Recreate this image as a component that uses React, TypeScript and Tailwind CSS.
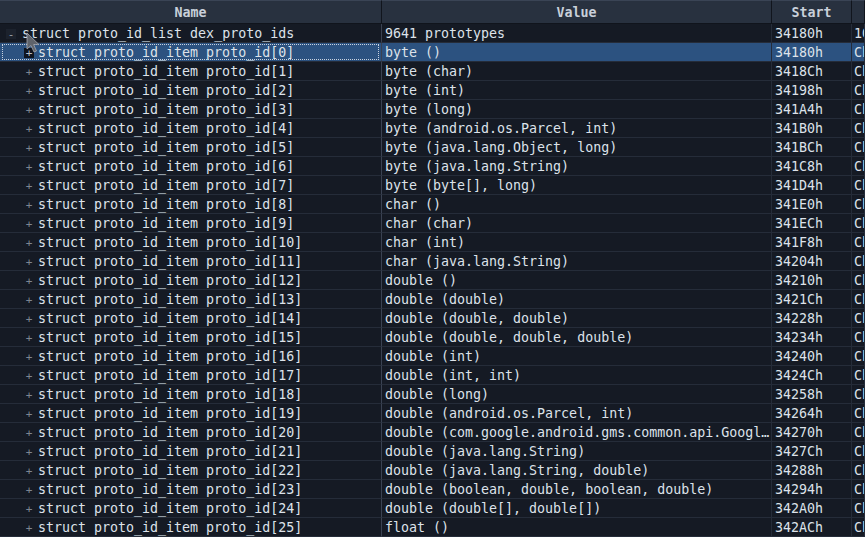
const values = [
  "byte ()",
  "byte (char)",
  "byte (int)",
  "byte (long)",
  "byte (android.os.Parcel, int)",
  "byte (java.lang.Object, long)",
  "byte (java.lang.String)",
  "byte (byte[], long)",
  "char ()",
  "char (char)",
  "char (int)",
  "char (java.lang.String)",
  "double ()",
  "double (double)",
  "double (double, double)",
  "double (double, double, double)",
  "double (int)",
  "double (int, int)",
  "double (long)",
  "double (android.os.Parcel, int)",
  "double (com.google.android.gms.common.api.GoogleApiClient)",
  "double (java.lang.String)",
  "double (java.lang.String, double)",
  "double (boolean, double, boolean, double)",
  "double (double[], double[])",
  "float ()",
];

const rows = values.map((value, i) => ({
  name: `struct proto_id_item proto_id[${i}]`,
  value,
  start: (0x34180 + i * 12).toString(16).toUpperCase() + "h",
}));

const cell =
  "flex h-[19px] min-w-0 items-center overflow-hidden whitespace-nowrap border-b border-r border-[#252c39] pt-[2px]";

const Cursor = () => (
  <svg
    className="pointer-events-none absolute left-[26px] top-[32px]"
    width="16"
    height="22"
    viewBox="0 0 16 22"
  >
    <path
      d="M1 1 L1 17 L5 13.5 L8 20 L10.5 19 L7.6 12.6 L13 12.6 Z"
      fill="#5f636b"
      stroke="#a4a7ae"
      strokeWidth="0.8"
      strokeLinejoin="round"
    />
  </svg>
);

const App = () => {
  return (
    <div
      className="relative h-[537px] w-[865px] overflow-hidden bg-[#151a24] text-[13.3px] leading-none text-[#dde2ea]"
      style={{ fontFamily: '"DejaVu Sans Mono", "Liberation Mono", monospace' }}
    >
      <div className="grid grid-cols-[382px_390px_80px_1fr]">
        {["Name", "Value", "Start", ""].map((h) => (
          <div
            key={h}
            className="flex h-[24px] items-center justify-center border-t border-b border-r border-t-[#3a4455] border-b-[#10141c] border-r-[#11151d] bg-[#28313f] pt-[1px] font-bold text-[#c9d0da]"
          >
            {h}
          </div>
        ))}

        <div className={`${cell} relative border-r-[#3a4252] pl-[22px]`}>
          <span className="absolute left-[6px] top-[5px] flex h-[10px] w-[10px] items-center justify-center bg-[#1c222d] text-[11px] text-[#9aa1ab]">
            -
          </span>
          struct proto_id_list dex_proto_ids
        </div>
        <div className={`${cell} pl-[3px]`}>9641 prototypes</div>
        <div className={`${cell} pl-[3px]`}>34180h</div>
        <div className={`${cell} pl-[2px]`}>10h</div>

        {rows.map((r, i) => {
          const sel = i === 0;
          return (
            <div key={r.name} className="contents">
              <div
                className={`${cell} relative border-r-[#3a4252] pl-[38px] ${
                  sel ? "bg-[#2c5280]" : ""
                }`}
              >
                {sel && (
                  <span className="pointer-events-none absolute inset-x-[2px] inset-y-[1px] border border-dotted border-[#c8d2e0]" />
                )}
                <span
                  className={`absolute left-[24px] top-[5px] flex h-[10px] w-[10px] items-center justify-center text-[11px] ${
                    sel ? "bg-[#0f1520] text-[#b8c0cc]" : "text-[#7e8691]"
                  }`}
                >
                  +
                </span>
                {r.name}
              </div>
              <div className={`${cell} pl-[3px] ${sel ? "bg-[#2c5280]" : ""}`}>
                <span className="min-w-0 truncate">{r.value}</span>
              </div>
              <div className={`${cell} pl-[3px] ${sel ? "bg-[#2c5280]" : ""}`}>
                {r.start}
              </div>
              <div className={`${cell} pl-[2px] ${sel ? "bg-[#2c5280]" : ""}`}>
                Char
              </div>
            </div>
          );
        })}
      </div>
      <Cursor />
    </div>
  );
};

export default App;
